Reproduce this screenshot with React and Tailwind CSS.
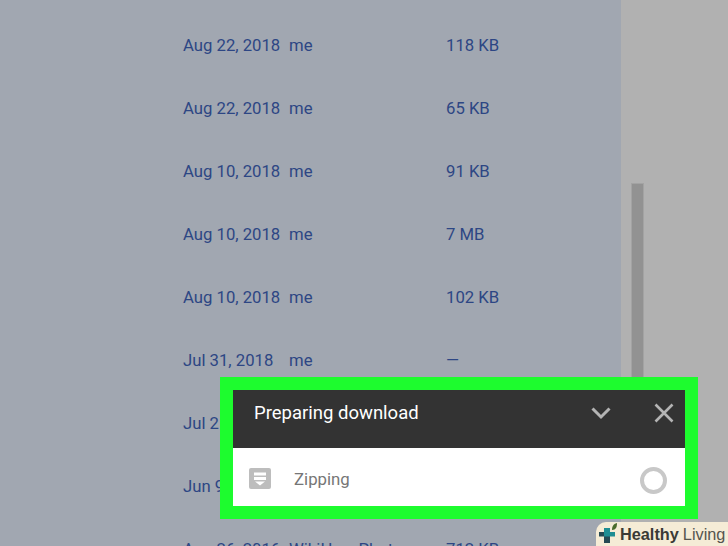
import React from "react";

const rows = [
  ["Aug 22, 2018", "me", "118 KB"],
  ["Aug 22, 2018", "me", "65 KB"],
  ["Aug 10, 2018", "me", "91 KB"],
  ["Aug 10, 2018", "me", "7 MB"],
  ["Aug 10, 2018", "me", "102 KB"],
  ["Jul 31, 2018", "me", "—"],
  ["Jul 25, 2018", "me", "—"],
  ["Jun 9, 2018", "me", "—"],
  ["Aug 26, 2016", "WikiHow Photos", "712 KB"],
];

export default function App() {
  return (
    <div className="relative flex h-[546px] w-[728px] overflow-hidden bg-[#b1b1b1] font-['Roboto',sans-serif]">
      <main className="flex h-full w-[621px] flex-col bg-[#a1a7b1] pt-[15px] pl-[183px] text-[16.7px] text-[#2d4684]">
        {rows.map((r, i) => (
          <div key={i} className="flex h-[63px] shrink-0 items-center pb-[1px]">
            <span className="w-[106px] shrink-0 whitespace-nowrap">{r[0]}</span>
            <span className="w-[157px] shrink-0 whitespace-nowrap">{r[1]}</span>
            <span className="whitespace-nowrap">{r[2]}</span>
          </div>
        ))}
      </main>
      <aside className="flex-1 pt-[183px] pl-[10px]">
        <div className="h-[200px] w-[13px] border border-[#a3a3a3] bg-[#929292]" />
      </aside>

      <div className="absolute left-[220px] top-[377px] w-[478px] border-[13px] border-[#1dfc2e]">
        <div className="flex h-[58px] items-center bg-[#333333] pb-[12px] pl-[21px] pr-[11px] text-white">
          <span className="flex-1 pt-[2px] text-[18.5px]">Preparing download</span>
          <svg width="20" height="14" viewBox="0 0 20 14" className="mr-[43px]" fill="none" stroke="#b4b4b4" strokeWidth="3">
            <path d="M1.5 2.5 10 11l8.500-8.500" />
          </svg>
          <svg width="20" height="20" viewBox="0 0 20 20" fill="none" stroke="#b4b4b4" strokeWidth="2.600">
            <path d="M1.500 1.500l17 17M18.500 1.500l-17 17" />
          </svg>
        </div>
        <div className="flex h-[58px] items-center bg-white pt-[6px] pl-[16px] pr-[18px]">
          <svg width="22" height="22" viewBox="0 0 22 22" className="mr-[23px] mb-[2px]">
            <rect width="22" height="21" rx="2" fill="#bdbdbd" />
            <path d="M5 4.500h12v3H5zM5 9h12v3H5z" fill="#fff" />
            <path d="M6 13.500h10l-5 4z" fill="#fff" />
          </svg>
          <span className="flex-1 text-[16.8px] text-[#767676]">Zipping</span>
          <div className="h-[27px] w-[27px] rounded-full border-[4px] border-[#c8c8c8]" />
        </div>
      </div>

      <div className="absolute bottom-0 right-0 flex h-[24px] w-[132px] items-center rounded-tl-[10px] bg-[#f5ecd6] pl-[2px] font-['Liberation_Sans',sans-serif] text-[16.3px] leading-none">
        <svg width="22" height="24" viewBox="0 0 22 24" className="mt-[-1px] shrink-0">
          <path d="M6 6h6v15H6z" fill="#1e8e93" />
          <path d="M12 10h5v4.500h-5z" fill="#1e8e93" />
          <path d="M1 10h5v4.500H1z" fill="#254a54" />
          <path d="M6 14.500h6V21H6z" fill="#254a54" />
          <path d="M14 8c0-3 1-6 5-7 0 4-1 7-5 7z" fill="#4a6b2c" />
        </svg>
        <span className="font-bold text-[#3a3a35]">Healthy</span>
        <span className="ml-[4px] text-[#55554f]">Living</span>
      </div>
    </div>
  );
}
